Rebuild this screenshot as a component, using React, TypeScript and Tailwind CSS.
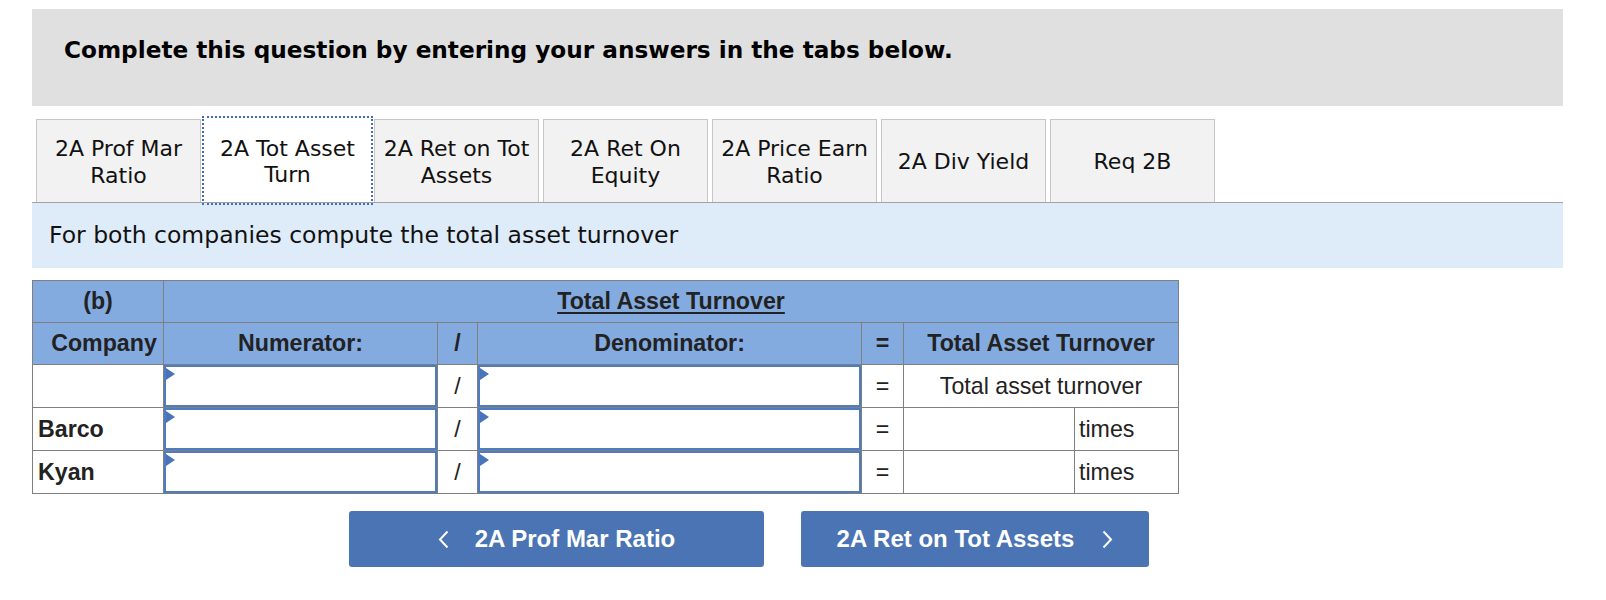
import React from "react";

const tabs = [
  ["2A Prof Mar", "Ratio"],
  ["2A Tot Asset", "Turn"],
  ["2A Ret on Tot", "Assets"],
  ["2A Ret On", "Equity"],
  ["2A Price Earn", "Ratio"],
  ["2A Div Yield"],
  ["Req 2B"],
];

const verdana = { fontFamily: '"DejaVu Sans", Verdana, sans-serif' };

function AnswerBox() {
  return (
    <div className="relative h-[42px] w-full border-2 border-[#4f7bc1] bg-white">
      <span className="absolute left-0 top-[1px] h-0 w-0 border-y-[6px] border-l-[9px] border-y-transparent border-l-[#4a74b8]" />
    </div>
  );
}

function DataRow({ company, first }: { company: string; first?: boolean }) {
  return (
    <tr>
      <td className="h-[43px] border border-[#7f7f7f] px-[5px] font-bold">{company}</td>
      <td className="border border-[#7f7f7f] p-0">
        <AnswerBox />
      </td>
      <td className="border border-[#7f7f7f] text-center">/</td>
      <td className="border border-[#7f7f7f] p-0">
        <AnswerBox />
      </td>
      <td className="border border-[#7f7f7f] text-center">=</td>
      {first ? (
        <td colSpan={2} className="border border-[#7f7f7f] text-center">
          Total asset turnover
        </td>
      ) : (
        <>
          <td className="border border-[#7f7f7f]"></td>
          <td className="border border-[#7f7f7f] px-[4px]">times</td>
        </>
      )}
    </tr>
  );
}

export default function App() {
  return (
    <div className="w-[1606px] bg-white pl-[32px] pt-[9px] pb-[33px]">
      <div className="w-[1531px]">
        <div className="flex h-[97px] items-center bg-[#e0e0e0] pl-[32px] pb-[14px]">
          <h2 className="text-[23.2px] font-bold text-black" style={verdana}>
            Complete this question by entering your answers in the tabs below.
          </h2>
        </div>

        <div className="mt-[13px] flex gap-[4px] border-b border-[#a3a3a3] pl-[4px]" style={verdana}>
          {tabs.map((t, i) => (
            <div
              key={i}
              className={
                i === 1
                  ? "flex h-[83px] w-[165px] flex-col items-center justify-center bg-white pt-[3px] text-[22px] leading-[26.5px] text-[#111] outline-2 outline-offset-1 outline-dotted outline-[#3f6db8]"
                  : "flex h-[83px] w-[165px] flex-col items-center justify-center border border-b-0 border-[#c6c6c6] bg-[#f2f2f2] pt-[3px] text-[22px] leading-[26.5px] text-[#111]"
              }
            >
              {t.map((line) => (
                <span key={line}>{line}</span>
              ))}
            </div>
          ))}
        </div>

        <div className="flex h-[65px] items-center bg-[#deebf8] pl-[17px] text-[23.5px] text-[#111]" style={verdana}>
          For both companies compute the total asset turnover
        </div>

        <table
          className="mt-[12px] border-collapse text-[23.2px] text-[#222]"
          style={{ fontFamily: '"Liberation Sans", Arial, sans-serif' }}
        >
          <colgroup>
            <col className="w-[131px]" />
            <col className="w-[274px]" />
            <col className="w-[40px]" />
            <col className="w-[384px]" />
            <col className="w-[42px]" />
            <col className="w-[171px]" />
            <col className="w-[104px]" />
          </colgroup>
          <thead className="bg-[#84abe0] font-bold">
            <tr>
              <th className="h-[42px] border border-[#7f7f7f] text-center">(b)</th>
              <th colSpan={6} className="border border-[#7f7f7f] text-center">
                <span className="underline underline-offset-[3px]">Total Asset Turnover</span>
              </th>
            </tr>
            <tr>
              <th className="h-[42px] border border-[#7f7f7f] pl-[12px] text-center">Company</th>
              <th className="border border-[#7f7f7f] text-center">Numerator:</th>
              <th className="border border-[#7f7f7f] text-center">/</th>
              <th className="border border-[#7f7f7f] text-center">Denominator:</th>
              <th className="border border-[#7f7f7f] text-center">=</th>
              <th colSpan={2} className="border border-[#7f7f7f] text-center">
                Total Asset Turnover
              </th>
            </tr>
          </thead>
          <tbody>
            <DataRow company="" first />
            <DataRow company="Barco" />
            <DataRow company="Kyan" />
          </tbody>
        </table>

        <div
          className="ml-[317px] mt-[17px] flex gap-[37px] text-[24px] font-bold text-white"
          style={{ fontFamily: '"Liberation Sans", Arial, sans-serif' }}
        >
          <button className="flex h-[56px] w-[415px] items-center justify-center gap-[26px] rounded-[3px] bg-[#4a74b3]">
            <svg width="11" height="19" viewBox="0 0 11 19" fill="none">
              <path d="M9.5 1.5L2 9.5L9.5 17.5" stroke="white" strokeWidth="2" />
            </svg>
            <span>2A Prof Mar Ratio</span>
          </button>
          <button className="flex h-[56px] w-[348px] items-center justify-center gap-[28px] rounded-[3px] bg-[#4a74b3]">
            <span>2A Ret on Tot Assets</span>
            <svg width="11" height="19" viewBox="0 0 11 19" fill="none">
              <path d="M1.5 1.5L9 9.5L1.5 17.5" stroke="white" strokeWidth="2" />
            </svg>
          </button>
        </div>
      </div>
    </div>
  );
}
